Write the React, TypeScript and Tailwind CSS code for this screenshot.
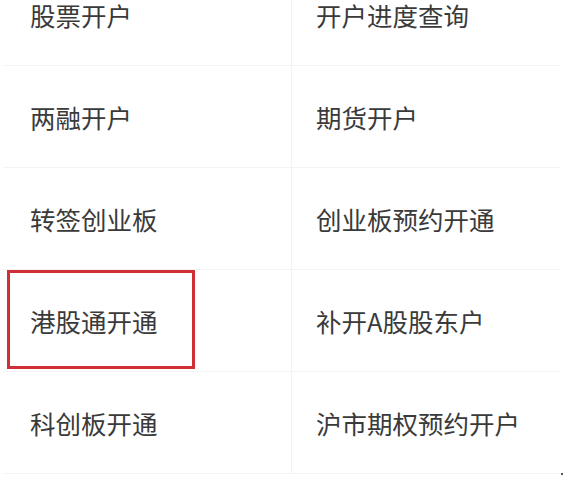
const rows: [string, string][] = [
  ['股票开户', '开户进度查询'],
  ['两融开户', '期货开户'],
  ['转签创业板', '创业板预约开通'],
  ['港股通开通', '补开A股股东户'],
  ['科创板开通', '沪市期权预约开户'],
];

export default function App() {
  return (
    <div
      className="relative h-[478px] w-[563px] overflow-hidden bg-white text-[#3a3a3a]"
      style={{ fontFamily: '"Noto Sans CJK SC", "Noto Sans", sans-serif' }}
    >
      <div className="-mt-[36px] ml-[3px] w-[557px]">
        {rows.map(([left, right]) => (
          <div key={left} className="grid h-[102px] grid-cols-[289px_1fr] border-b border-[#f3f3f3]">
            <div className="flex items-center border-r border-[#f3f3f3] pl-[27px] pt-[2px] text-[25.5px]">
              {left}
            </div>
            <div className="flex items-center pl-[24px] pt-[2px] text-[25.5px]">{right}</div>
          </div>
        ))}
      </div>
      <div className="absolute left-[7px] top-[270px] h-[99px] w-[188px] border-[3px] border-[#cf2f37]" />
      <div className="absolute left-[561px] top-[473px] h-[2px] w-[2px] bg-[#555]" />
    </div>
  );
}
